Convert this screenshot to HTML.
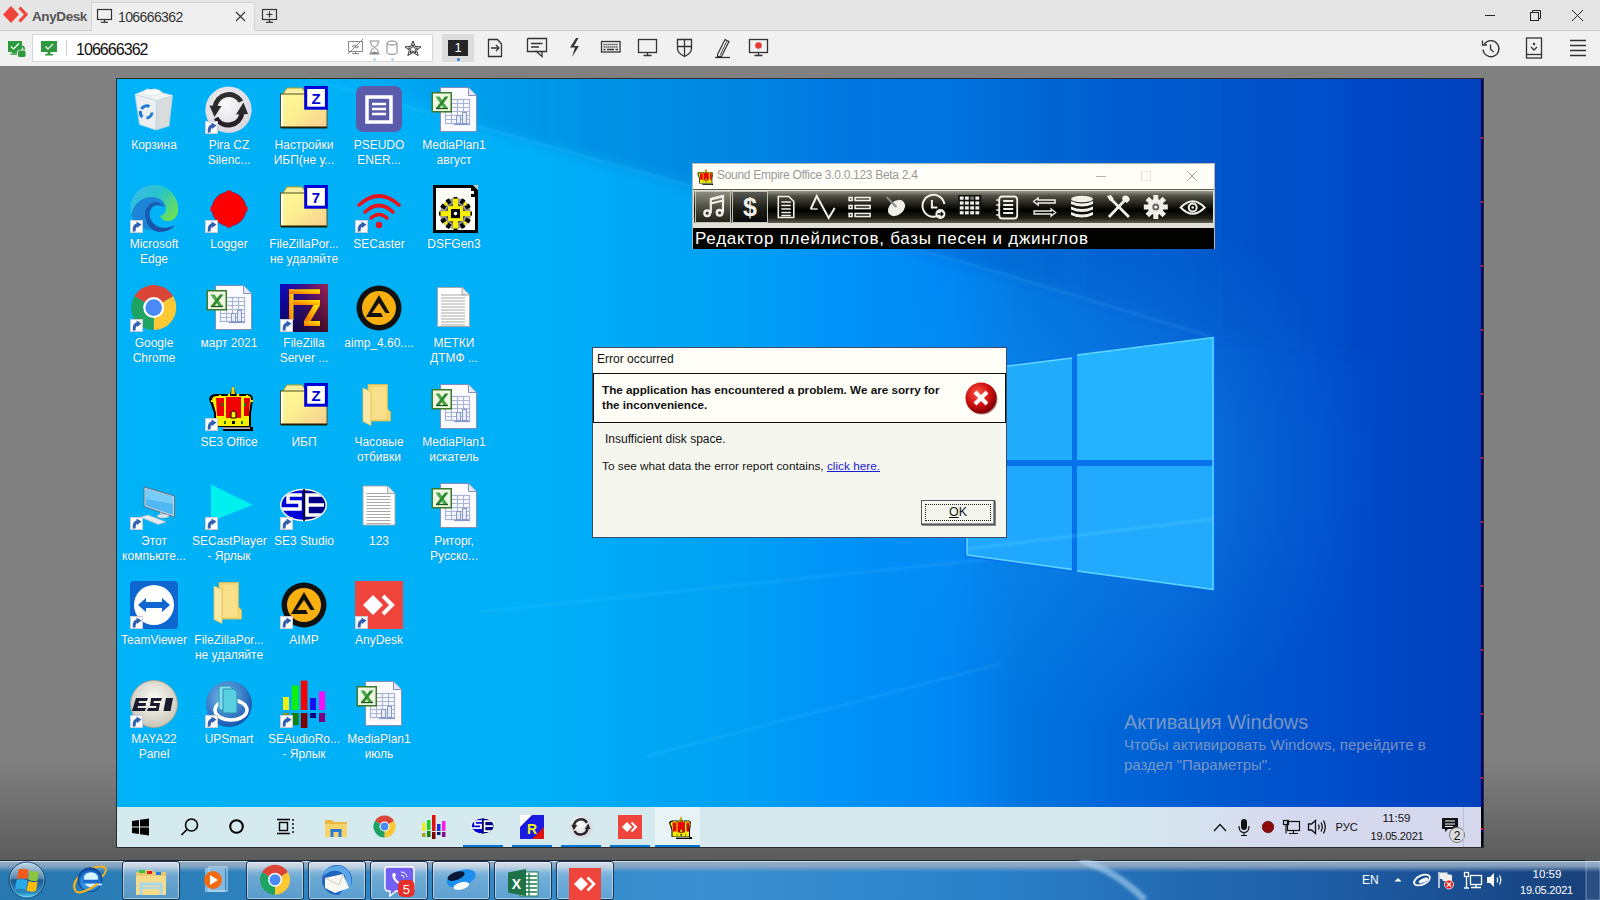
<!DOCTYPE html>
<html><head><meta charset="utf-8"><style>*{margin:0;padding:0;box-sizing:border-box}
html,body{width:1600px;height:900px;overflow:hidden}
body{position:relative;font-family:"Liberation Sans",sans-serif;background:linear-gradient(#808080 0,#808080 760px,#5c5c5c 858px);}
.a{position:absolute}
#title{left:0;top:0;width:1600px;height:31px;background:#e5e5e5;border-bottom:1px solid #cdcdcd}
#tool{left:0;top:31px;width:1600px;height:35px;background:#f1f1f1}
#remote{left:116px;top:78px;width:1368px;height:770px;background:#2b2b2b}
#screen{left:117px;top:79px;width:1366px;height:768px;overflow:hidden}
#desk{left:0;top:0;width:1366px;height:728px}
#rtask{left:0;top:728px;width:1366px;height:40px;background:linear-gradient(90deg,#d5eaef 0,#d5e9ee 986px,#d6d8ee 1186px,#d6d8ee 1366px)}
#w7{left:0;top:860px;width:1600px;height:40px;background:linear-gradient(90deg,#2878b0 0,#2e84c0 300px,#3a90d0 700px,#2a80c8 1000px,#2268b0 1200px,#1e5ea6 1320px,#1a4c8e 1480px,#183f78 1600px)}
.lab{width:74px;text-align:center;color:#fff;font-size:12px;line-height:15px;text-shadow:0 0 1px rgba(0,40,80,0.35);white-space:nowrap}
.btn{top:1px;width:58px;height:39px;border:1px solid #1c3450;border-radius:3px;background:linear-gradient(rgba(255,255,255,0.62),rgba(255,255,255,0.3) 40%,rgba(255,255,255,0.2));box-shadow:inset 0 0 0 1px rgba(255,255,255,0.45)}
</style></head><body>
<div id="title" class="a">
 <svg class="a" style="left:0;top:0" width="90" height="30">
  <polygon points="11,6 19,14.5 11,23 3,14.5" fill="#ef443b"/>
  <polyline points="19.5,7.5 26,14.5 19.5,21.5" fill="none" stroke="#ef443b" stroke-width="3.2"/>
 </svg>
 <div class="a" style="left:32px;top:9px;font-size:13.5px;font-weight:bold;color:#545454;letter-spacing:-0.4px">AnyDesk</div>
 <div class="a" style="left:91px;top:2px;width:164px;height:29px;background:#efefef;border:1px solid #d3d3d3;border-bottom:none"></div>
 <svg class="a" style="left:96px;top:8px" width="18" height="16"><rect x="1.5" y="1.5" width="14" height="10" fill="none" stroke="#333" stroke-width="1.2"/><line x1="8.5" y1="11.5" x2="8.5" y2="14" stroke="#333" stroke-width="1.2"/><line x1="5" y1="14.3" x2="12" y2="14.3" stroke="#333" stroke-width="1.2"/></svg>
 <div class="a" style="left:118px;top:8.5px;font-size:14px;color:#333;letter-spacing:-0.6px">106666362</div>
 <svg class="a" style="left:235px;top:11px" width="11" height="11"><path d="M1 1L10 10M10 1L1 10" stroke="#333" stroke-width="1.1"/></svg>
 <svg class="a" style="left:261px;top:8px" width="18" height="16"><rect x="1.5" y="1.5" width="14" height="10" fill="none" stroke="#333" stroke-width="1.2"/><line x1="8.5" y1="11.5" x2="8.5" y2="14" stroke="#333" stroke-width="1.2"/><line x1="5" y1="14.3" x2="12" y2="14.3" stroke="#333" stroke-width="1.2"/><path d="M8.5 3.5V9.5M5.5 6.5H11.5" stroke="#333" stroke-width="1.2"/></svg>
 <svg class="a" style="left:1480px;top:5px" width="110" height="20">
  <line x1="5" y1="10.5" x2="15" y2="10.5" stroke="#222" stroke-width="1"/>
  <rect x="50.5" y="7.5" width="8" height="8" fill="none" stroke="#222"/><path d="M52.5 7.5V5.5H60.5V13.5H58.5" fill="none" stroke="#222"/>
  <path d="M92 5L103 16M103 5L92 16" stroke="#222" stroke-width="1"/>
 </svg>
</div>
<div id="tool" class="a">
 <svg class="a" style="left:6px;top:9px" width="22" height="18">
  <rect x="2" y="1" width="14" height="11" fill="#2e9a3e"/><rect x="6" y="12" width="6" height="1.5" fill="#2e9a3e"/><rect x="4.5" y="13.5" width="7" height="1.3" fill="#2e9a3e"/>
  <path d="M5 6.5L7.5 9L13 3.5" fill="none" stroke="#fff" stroke-width="1.2"/>
  <rect x="11.5" y="10" width="8.5" height="7.5" rx="2" fill="#2e9a3e" stroke="#f1f1f1" stroke-width="1"/><path d="M13.5 10V8.5a2.3 2.3 0 0 1 4.6 0V10" fill="none" stroke="#2e9a3e" stroke-width="1.6"/>
 </svg>
 <div class="a" style="left:32px;top:3px;width:401px;height:28px;background:#fff;border:1px solid #d6d6d6"></div>
 <svg class="a" style="left:40px;top:9px" width="20" height="18">
  <rect x="1" y="1" width="16" height="11" fill="#2e9a3e"/><rect x="7.5" y="12" width="3" height="2" fill="#2e9a3e"/><rect x="5" y="14" width="8" height="1.5" fill="#2e9a3e"/>
  <path d="M5.5 6.5L8 9L13 4" fill="none" stroke="#fff" stroke-width="1.2"/>
 </svg>
 <div class="a" style="left:66px;top:9px;width:1px;height:16px;background:#cfcfcf"></div>
 <div class="a" style="left:76px;top:9.5px;font-size:16px;color:#111;letter-spacing:-0.95px">106666362</div>
 <svg class="a" style="left:345px;top:7px" width="80" height="22" fill="none" stroke="#888" stroke-width="1">
  <rect x="3.5" y="3.5" width="14" height="10"/><line x1="10.5" y1="13.5" x2="10.5" y2="15.5"/><line x1="7" y1="15.5" x2="14" y2="15.5"/><line x1="3" y1="16" x2="18" y2="1"/>
  <path d="M7 8.5q3-3 6 0" /><path d="M14 8.5q-3 3-6 0"/>
  <path d="M24.5 3H34.5M24.5 16H34.5M25.5 3.5Q25.5 8 29.5 9.5Q33.5 8 33.5 3.5M25.5 15.5Q25.5 11 29.5 9.5Q33.5 11 33.5 15.5"/><path d="M25.5 15.5Q29.5 12.5 33.5 15.5Z" fill="#888"/>
  <ellipse cx="47" cy="5" rx="5" ry="2"/><path d="M42 5V14.5A5 2 0 0 0 52 14.5V5"/>
  <path d="M68 3L70.3 8.5L76 8.8L71.6 12.3L73.2 17.5L68 14.5L62.8 17.5L64.4 12.3L60 8.8L65.7 8.5Z" stroke="#333"/>
  <path d="M68 6.5L69.3 10L72.5 10.2L70 12.2L71 15L68 13.3L65 15L66 12.2L63.5 10.2L66.7 10Z" stroke="#333"/>
 </svg>
 <div class="a" style="left:373px;top:27px;width:3px;height:3px;border-radius:50%;background:#b8d4f4"></div>
 <div class="a" style="left:391px;top:27px;width:3px;height:3px;border-radius:50%;background:#b8d4f4"></div>
 <div class="a" style="left:442px;top:3px;width:32px;height:28px;background:#dcdcdc"></div>
 <div class="a" style="left:448px;top:9px;width:20px;height:16px;background:#252525;color:#fff;font-size:13px;font-weight:normal;text-align:center;line-height:16px">1</div>
 <div class="a" style="left:456.5px;top:26.5px;width:3.5px;height:3.5px;border-radius:50%;background:#2a7de1"></div>
 <svg class="a" style="left:480px;top:3px" width="300" height="30" fill="none" stroke="#333" stroke-width="1.3">
  <path d="M8.5 5.5H17.5L21.5 10V22.5H8.5Z"/><path d="M11 14H19M16 11L19 14L16 17"/>
  <path d="M47.5 4.5H66.5V17.5H56.5L62 22.5V17.5"/><path d="M47.5 4.5V17.5H57"/><path d="M51 9.5H62.5M51 13H59"/>
  <path d="M96 4L90 13.5H95L92 23L99 12H94L98.5 4Z" fill="#333" stroke="none"/>
  <rect x="121.5" y="7.5" width="18.5" height="10.5"/><path d="M123.5 10.5h14.5M123.5 13h14.5" stroke-dasharray="1.2 0.8" stroke-width="1.3"/><path d="M123.5 15.5h2M127 15.5h7M135.5 15.5h2.5" stroke-width="1.3"/>
  <rect x="158.5" y="5.5" width="18" height="13"/><path d="M167.5 18.5V21M163.5 21.5H171.5"/>
  <path d="M197.5 5.5H211.5V14.5Q211.5 19 204.5 22.5Q197.5 19 197.5 14.5Z"/><path d="M204.5 5.5V22.5M197.5 12.5H211.5"/>
  <path d="M237.5 20.5L245 5.5L249 7.5L241.5 22.5L237.5 22.5Z" stroke-width="1.2"/><path d="M240 21.5L247 7" stroke-width="0.9"/><path d="M235 23.5H250" stroke-width="1.3"/>
  <rect x="269.5" y="5.5" width="18" height="13"/><path d="M278.5 18.5V21M274.5 21.5H282.5"/><circle cx="278.5" cy="11.5" r="3.3" fill="#e53935" stroke="none"/>
 </svg>
 <svg class="a" style="left:1478px;top:3.5px" width="115" height="28" fill="none" stroke="#333" stroke-width="1.3">
  <path d="M6.5 9A8 8 0 1 1 5 14.5"/><path d="M4.5 5.5V10H9"/><path d="M12.5 9.5V14L15.5 17"/>
  <rect x="48.5" y="3" width="15" height="20"/><path d="M48.5 19.5H63.5"/><circle cx="56" cy="9" r="1.2" fill="#333" stroke="none"/><path d="M53 12L56 15L59 12"/>
  <path d="M92 5.5H108M92 10.5H108M92 15.5H108M92 20.5H108"/>
 </svg>
</div>
<div id="remote" class="a"></div>
<div id="screen" class="a">
<div id="desk" class="a"><svg class="a" style="left:0;top:0" width="1366" height="728" viewBox="0 0 1366 728">
<defs>
<linearGradient id="bg" x1="0" y1="0" x2="1366" y2="0" gradientUnits="userSpaceOnUse">
<stop offset="0" stop-color="#00b2f8"/><stop offset="0.30" stop-color="#00b0f8"/><stop offset="0.46" stop-color="#00a0f4"/>
<stop offset="0.52" stop-color="#0094f8"/><stop offset="0.61" stop-color="#0088f4"/><stop offset="0.66" stop-color="#0076e0"/>
<stop offset="0.73" stop-color="#0066d8"/><stop offset="0.83" stop-color="#0055cc"/><stop offset="0.88" stop-color="#004ecc"/>
<stop offset="1" stop-color="#0040bc"/></linearGradient>
<linearGradient id="ov" x1="192" y1="0" x2="1366" y2="0" gradientUnits="userSpaceOnUse">
<stop offset="0" stop-color="#003caa" stop-opacity="0"/><stop offset="0.18" stop-color="#003caa" stop-opacity="0.2"/>
<stop offset="0.47" stop-color="#003caa" stop-opacity="0.3"/><stop offset="0.68" stop-color="#003caa" stop-opacity="0.2"/>
<stop offset="0.94" stop-color="#003caa" stop-opacity="0"/></linearGradient>
<radialGradient id="glow" cx="1000" cy="390" r="260" gradientUnits="userSpaceOnUse">
<stop offset="0" stop-color="#30b0ff" stop-opacity="0.3"/><stop offset="1" stop-color="#30b0ff" stop-opacity="0"/></radialGradient>
<filter id="bl" x="-10%" y="-10%" width="120%" height="120%"><feGaussianBlur stdDeviation="6"/></filter>
<filter id="bl2"><feGaussianBlur stdDeviation="1.2"/></filter>
</defs>
<rect width="1366" height="728" fill="url(#bg)"/>
<polygon points="192,-20 1400,-20 1400,300 1096,258 883,194 363,48" fill="url(#ov)" filter="url(#bl)"/>
<rect width="1366" height="728" fill="url(#glow)"/>

<g stroke="#9fe8ff" stroke-opacity="0.12" stroke-width="2" filter="url(#bl2)" fill="none">
<line x1="192" y1="0" x2="883" y2="194"/><line x1="883" y1="194" x2="1096" y2="258"/>
<line x1="363" y1="533" x2="883" y2="479"/>
<line x1="530" y1="677" x2="883" y2="585"/>
</g>
<polygon points="848,291 1098,257 1098,512 848,478" fill="#0872ec"/>
<polygon points="850,292 955,279 955,381 850,381" fill="#22acfc"/>
<polygon points="960,276 1096,258.5 1096,381 960,381" fill="#24b4ff"/>
<polygon points="850,387 955,387 955,490.5 850,476" fill="#20a8fe"/>
<polygon points="960,387 1096,387 1096,510.5 960,492" fill="#22aafe"/>
<g stroke="#66e0ff" stroke-width="1.5" fill="none" stroke-opacity="0.9">
<polyline points="850,292 955,279"/><polyline points="960,276 1096,258.5 1096,510.5 960,492"/><polyline points="850,476 955,490.5"/><polyline points="850,292 850,476"/>
</g>
<line x1="850" y1="470" x2="1096" y2="440" stroke="#70e0ff" stroke-opacity="0.3" stroke-width="2" filter="url(#bl2)"/>
<g font-family="Liberation Sans" fill="#b4b4bc" fill-opacity="0.68">
<text x="1007" y="649.7" font-size="20">Активация Windows</text>
<text x="1007" y="671" font-size="15">Чтобы активировать Windows, перейдите в</text>
<text x="1007" y="691" font-size="15">раздел "Параметры".</text>
</g>
</svg>
<svg class="a" style="left:13px;top:7px" width="48" height="48" viewBox="0 0 48 48"><g transform="translate(0,0)"><path d="M5 8.5L27 14.5L26 44L9.5 38.5Z" fill="#eceeef" stroke="#b8d4e4" stroke-width="0.8"/><path d="M27 14.5L42.5 9.5L39 40L26 44Z" fill="#d8dcdd" stroke="#b8d4e4" stroke-width="0.8"/><path d="M5 8.5L18 3L42.5 9.5L27 14.5Z" fill="#f2f4f4" stroke="#c8dce8" stroke-width="0.8"/><path d="M12 8Q15 2 20 4Q26 1 32 6Q28 10 20 10Z" fill="#fafafa" stroke="#d0d8dc" stroke-width="0.6"/><g fill="none" stroke="#1a7ad8" stroke-width="3"><path d="M11.5 23A6 6 0 0 1 19.5 20.5"/><path d="M22 26.5A6 6 0 0 1 16.5 32"/><path d="M12.5 31A6 6 0 0 1 10.5 25"/></g></g></svg><div class="lab a" style="left:0px;top:59px">Корзина</div>
<svg class="a" style="left:88px;top:7px" width="48" height="48" viewBox="0 0 48 48"><g transform="translate(0,0)"><defs><radialGradient id="pg" cx="45%" cy="40%" r="60%"><stop offset="0" stop-color="#fafafa"/><stop offset="1" stop-color="#d8d6de"/></radialGradient></defs><circle cx="23.5" cy="23.8" r="23.2" fill="url(#pg)"/><path d="M36 15.5A14 14 0 0 0 10 21" fill="none" stroke="#2e2e2e" stroke-width="5"/><path d="M4.5 19.5L16.5 20L9.5 31Z" fill="#2a2a2a"/><path d="M11 32A14 14 0 0 0 37 27" fill="none" stroke="#262026" stroke-width="5"/><path d="M31 28.5L43 28L38.5 16.5Z" fill="#2a2a2a"/></g><g><rect x="0.5" y="35.5" width="12" height="12" fill="#fdfdfd" stroke="#c8ccd4" stroke-width="1"/><path d="M4.2 46.5Q3.5 40.5 8 39.5" fill="none" stroke="#3060b0" stroke-width="3"/><path d="M6.5 36.5L11.5 39.5L7 43Z" fill="#3060b0"/></g></svg><div class="lab a" style="left:75px;top:59px">Pira CZ<br>Silenc...</div>
<svg class="a" style="left:163px;top:7px" width="48" height="48" viewBox="0 0 48 48"><g transform="translate(0,0)"><defs><linearGradient id="fdg" x1="0" y1="0" x2="1" y2="1"><stop offset="0" stop-color="#fff89a"/><stop offset="0.45" stop-color="#fcf090"/><stop offset="1" stop-color="#f8cc90"/></linearGradient></defs><path d="M3 8L7 2H22L25 6V9H3Z" fill="#f8f0a0" stroke="#b8a020" stroke-width="1"/><rect x="0.5" y="8" width="46.5" height="33.5" fill="url(#fdg)" stroke="#505020" stroke-width="1"/><rect x="1" y="9" width="2" height="32" fill="#fff"/><rect x="1" y="40.5" width="46" height="2" fill="#202000"/><rect x="24.2" y="0" width="23.7" height="23.7" fill="#0000d8"/><rect x="27.2" y="3" width="17.7" height="17.7" fill="#fffff8"/><text x="36" y="18" font-family="Liberation Sans" font-weight="bold" font-size="15" fill="#0000d8" text-anchor="middle">Z</text></g></svg><div class="lab a" style="left:150px;top:59px">Настройки<br>ИБП(не у...</div>
<svg class="a" style="left:238px;top:7px" width="48" height="48" viewBox="0 0 48 48"><g transform="translate(0,0)"><rect x="1" y="0" width="46" height="46" rx="7" fill="#5b5bab"/><rect x="12" y="11" width="24" height="25" fill="none" stroke="#fff" stroke-width="3.5"/><path d="M17 18H31M17 23H31M17 28H31" stroke="#fff" stroke-width="2.5"/></g></svg><div class="lab a" style="left:225px;top:59px">PSEUDO<br>ENER...</div>
<svg class="a" style="left:313px;top:7px" width="48" height="48" viewBox="0 0 48 48"><g transform="translate(0,0)"><path d="M10.5 1.5H38.5L46.5 9.5V45.5H10.5Z" fill="#fbfbff" stroke="#8090b8" stroke-width="1"/><path d="M38.5 1.5V9.5H46.5" fill="#e4e8f4" stroke="#8090b8" stroke-width="1"/><g stroke="#a8b4d8" stroke-width="1.2" fill="none"><rect x="15.5" y="13.5" width="24" height="24"/><path d="M15.5 17.5H39.5M15.5 21.5H39.5M15.5 25.5H39.5M15.5 29.5H39.5M15.5 33.5H39.5M21.5 13.5V37.5M27.5 13.5V37.5M33.5 13.5V37.5"/></g><g fill="#e8ecf8" stroke="#8898c8" stroke-width="1"><rect x="26.5" y="29.5" width="4" height="8"/><rect x="32.5" y="26.5" width="4" height="11"/></g><path d="M24 38.5H40" stroke="#8898c8" stroke-width="1.2"/><rect x="1.5" y="6" width="20.5" height="20.5" fill="#3a7a2a"/><rect x="3" y="7.5" width="17.5" height="17.5" fill="#eef6e4"/><path d="M5.5 10.5H9.5L17.5 22H13.5Z" fill="#4aa848"/><path d="M15 10.5H18.5L9.5 22H6Z" fill="#2e8a2e"/><path d="M6 22.5H18" stroke="#1a5a1a" stroke-width="1.3"/></g></svg><div class="lab a" style="left:300px;top:59px">MediaPlan1<br>август</div>
<svg class="a" style="left:13px;top:106px" width="48" height="48" viewBox="0 0 48 48"><g transform="translate(0,0)"><defs><linearGradient id="eg2" x1="0" y1="0" x2="1" y2="0.7"><stop offset="0" stop-color="#40b8f0"/><stop offset="0.5" stop-color="#28c4cc"/><stop offset="1" stop-color="#6ae05a"/></linearGradient><linearGradient id="eg3" x1="0" y1="0" x2="1" y2="1"><stop offset="0" stop-color="#1a60b8"/><stop offset="1" stop-color="#1a4a9a"/></linearGradient></defs><path d="M1 30A24 24 0 1 1 48 27Q47 34 40 36Q32 37 30 31Q36 29 36 24Q34 12 21 12Q6 13 1 30Z" fill="url(#eg2)"/><path d="M1 30Q6 13 21 12Q33 12 36 22Q32 17 25 17Q16 18 15 28Q14 40 22 46Q6 42 1 30Z" fill="#1e84d8"/><path d="M15 28Q16 18 25 17Q31 17 35 22Q29 19 24 21Q18 25 20 33Q24 43 36 43Q42 42 45 40Q40 47 29 47Q15 45 15 28Z" fill="url(#eg3)"/></g><g><rect x="0.5" y="35.5" width="12" height="12" fill="#fdfdfd" stroke="#c8ccd4" stroke-width="1"/><path d="M4.2 46.5Q3.5 40.5 8 39.5" fill="none" stroke="#3060b0" stroke-width="3"/><path d="M6.5 36.5L11.5 39.5L7 43Z" fill="#3060b0"/></g></svg><div class="lab a" style="left:0px;top:158px">Microsoft<br>Edge</div>
<svg class="a" style="left:88px;top:106px" width="48" height="48" viewBox="0 0 48 48"><g transform="translate(0,0)"><circle cx="24" cy="24" r="17" fill="#ff0000" stroke="#802060" stroke-width="0.8"/><rect x="21.5" y="5.5" width="5" height="4" fill="#ff0000"/><rect x="21.5" y="38.5" width="5" height="4" fill="#ff0000"/><rect x="5.5" y="21.5" width="4" height="5" fill="#ff0000"/><rect x="38.5" y="21.5" width="4" height="5" fill="#ff0000"/></g><g><rect x="0.5" y="35.5" width="12" height="12" fill="#fdfdfd" stroke="#c8ccd4" stroke-width="1"/><path d="M4.2 46.5Q3.5 40.5 8 39.5" fill="none" stroke="#3060b0" stroke-width="3"/><path d="M6.5 36.5L11.5 39.5L7 43Z" fill="#3060b0"/></g></svg><div class="lab a" style="left:75px;top:158px">Logger</div>
<svg class="a" style="left:163px;top:106px" width="48" height="48" viewBox="0 0 48 48"><g transform="translate(0,0)"><defs><linearGradient id="fdg" x1="0" y1="0" x2="1" y2="1"><stop offset="0" stop-color="#fff89a"/><stop offset="0.45" stop-color="#fcf090"/><stop offset="1" stop-color="#f8cc90"/></linearGradient></defs><path d="M3 8L7 2H22L25 6V9H3Z" fill="#f8f0a0" stroke="#b8a020" stroke-width="1"/><rect x="0.5" y="8" width="46.5" height="33.5" fill="url(#fdg)" stroke="#505020" stroke-width="1"/><rect x="1" y="9" width="2" height="32" fill="#fff"/><rect x="1" y="40.5" width="46" height="2" fill="#202000"/><rect x="24.2" y="0" width="23.7" height="23.7" fill="#0000d8"/><rect x="27.2" y="3" width="17.7" height="17.7" fill="#fffff8"/><text x="36" y="18" font-family="Liberation Sans" font-weight="bold" font-size="15" fill="#0000d8" text-anchor="middle">7</text></g></svg><div class="lab a" style="left:150px;top:158px">FileZillaPor...<br>не удаляйте</div>
<svg class="a" style="left:238px;top:106px" width="48" height="48" viewBox="0 0 48 48"><g transform="translate(0,0)"><g fill="none" stroke="#e8141c" stroke-width="3.6" stroke-linecap="round"><path d="M4 20Q24 2 44 20"/><path d="M10 27Q24 14 38 27"/><path d="M16 33Q24 26 32 33"/></g><circle cx="24" cy="40" r="3.2" fill="#e8141c"/></g><g><rect x="0.5" y="35.5" width="12" height="12" fill="#fdfdfd" stroke="#c8ccd4" stroke-width="1"/><path d="M4.2 46.5Q3.5 40.5 8 39.5" fill="none" stroke="#3060b0" stroke-width="3"/><path d="M6.5 36.5L11.5 39.5L7 43Z" fill="#3060b0"/></g></svg><div class="lab a" style="left:225px;top:158px">SECaster</div>
<svg class="a" style="left:313px;top:106px" width="48" height="48" viewBox="0 0 48 48"><g transform="translate(0,0)"><path d="M3 0H43L48 5V48H3Z" fill="#000"/><rect x="6" y="3" width="35" height="42" fill="#fffff8"/><rect x="41" y="12" width="4" height="33" fill="#fffff8"/><path d="M43 0H48V5Z" fill="#c8c8c0"/><rect x="41" y="6" width="3" height="3" fill="#fff"/><g transform="translate(25.5,28.6)"><circle r="15.5" fill="#9a9a96"/><rect x="-2" y="-16.5" width="4" height="5" fill="#000" transform="rotate(0)"/><rect x="-2" y="-16.5" width="4" height="5" fill="#000" transform="rotate(30)"/><rect x="-2" y="-16.5" width="4" height="5" fill="#000" transform="rotate(60)"/><rect x="-2" y="-16.5" width="4" height="5" fill="#000" transform="rotate(90)"/><rect x="-2" y="-16.5" width="4" height="5" fill="#000" transform="rotate(120)"/><rect x="-2" y="-16.5" width="4" height="5" fill="#000" transform="rotate(150)"/><rect x="-2" y="-16.5" width="4" height="5" fill="#000" transform="rotate(180)"/><rect x="-2" y="-16.5" width="4" height="5" fill="#000" transform="rotate(210)"/><rect x="-2" y="-16.5" width="4" height="5" fill="#000" transform="rotate(240)"/><rect x="-2" y="-16.5" width="4" height="5" fill="#000" transform="rotate(270)"/><rect x="-2" y="-16.5" width="4" height="5" fill="#000" transform="rotate(300)"/><rect x="-2" y="-16.5" width="4" height="5" fill="#000" transform="rotate(330)"/><circle r="10" fill="#555"/><rect x="-2.5" y="-15" width="5" height="30" fill="#f8f000"/><rect x="-15" y="-2.5" width="30" height="5" fill="#f8f000"/><rect x="-7.5" y="-7.5" width="15" height="15" fill="#f8f000"/><rect x="-4.5" y="-4.5" width="9" height="9" fill="#000"/><circle r="1.8" fill="#fff"/><rect x="-11" y="-11" width="3" height="3" fill="#f8f000"/><rect x="8" y="-11" width="3" height="3" fill="#f8f000"/><rect x="-11" y="8" width="3" height="3" fill="#f8f000"/><rect x="8" y="8" width="3" height="3" fill="#f8f000"/></g></g></svg><div class="lab a" style="left:300px;top:158px">DSFGen3</div>
<svg class="a" style="left:13px;top:205px" width="48" height="48" viewBox="0 0 48 48"><g transform="translate(0,0)"><g transform="translate(23.7,23.6)"><path d="M0 0L-19.48 -11.25A22.5 22.5 0 0 1 19.48 -11.25Z" fill="#db4437"/><path d="M0 0L19.48 -11.25A22.5 22.5 0 0 1 0 22.5Z" fill="#fcc934"/><path d="M0 0L0 22.5A22.5 22.5 0 0 1 -19.48 -11.25Z" fill="#1ea362"/><circle r="10.5" fill="#fff"/><circle r="8.3" fill="#4a8af4"/></g></g><g><rect x="0.5" y="35.5" width="12" height="12" fill="#fdfdfd" stroke="#c8ccd4" stroke-width="1"/><path d="M4.2 46.5Q3.5 40.5 8 39.5" fill="none" stroke="#3060b0" stroke-width="3"/><path d="M6.5 36.5L11.5 39.5L7 43Z" fill="#3060b0"/></g></svg><div class="lab a" style="left:0px;top:257px">Google<br>Chrome</div>
<svg class="a" style="left:88px;top:205px" width="48" height="48" viewBox="0 0 48 48"><g transform="translate(0,0)"><path d="M10.5 1.5H38.5L46.5 9.5V45.5H10.5Z" fill="#fbfbff" stroke="#8090b8" stroke-width="1"/><path d="M38.5 1.5V9.5H46.5" fill="#e4e8f4" stroke="#8090b8" stroke-width="1"/><g stroke="#a8b4d8" stroke-width="1.2" fill="none"><rect x="15.5" y="13.5" width="24" height="24"/><path d="M15.5 17.5H39.5M15.5 21.5H39.5M15.5 25.5H39.5M15.5 29.5H39.5M15.5 33.5H39.5M21.5 13.5V37.5M27.5 13.5V37.5M33.5 13.5V37.5"/></g><g fill="#e8ecf8" stroke="#8898c8" stroke-width="1"><rect x="26.5" y="29.5" width="4" height="8"/><rect x="32.5" y="26.5" width="4" height="11"/></g><path d="M24 38.5H40" stroke="#8898c8" stroke-width="1.2"/><rect x="1.5" y="6" width="20.5" height="20.5" fill="#3a7a2a"/><rect x="3" y="7.5" width="17.5" height="17.5" fill="#eef6e4"/><path d="M5.5 10.5H9.5L17.5 22H13.5Z" fill="#4aa848"/><path d="M15 10.5H18.5L9.5 22H6Z" fill="#2e8a2e"/><path d="M6 22.5H18" stroke="#1a5a1a" stroke-width="1.3"/></g></svg><div class="lab a" style="left:75px;top:257px">март 2021</div>
<svg class="a" style="left:163px;top:205px" width="48" height="48" viewBox="0 0 48 48"><g transform="translate(0,0)"><defs><linearGradient id="fz" x1="0" y1="0" x2="1" y2="0"><stop offset="0" stop-color="#0808c8"/><stop offset="0.5" stop-color="#40108a"/><stop offset="1" stop-color="#a02050"/></linearGradient><linearGradient id="fzd" x1="0" y1="0" x2="0" y2="1"><stop offset="0" stop-color="#000" stop-opacity="0"/><stop offset="1" stop-color="#000" stop-opacity="0.55"/></linearGradient><linearGradient id="fzy" x1="1" y1="0" x2="0" y2="1"><stop offset="0" stop-color="#fff000"/><stop offset="1" stop-color="#ff6a00"/></linearGradient></defs><rect x="0" y="0" width="48" height="48" fill="url(#fz)"/><rect x="0" y="0" width="48" height="48" fill="url(#fzd)"/><g fill="url(#fzy)"><rect x="9" y="5.3" width="4.5" height="31"/><rect x="9" y="5.3" width="31" height="4.7"/><rect x="13" y="16" width="27" height="5"/><polygon points="33.5,21 40,21 30.5,37 24,37"/><rect x="24" y="37" width="16" height="5"/></g></g><g><rect x="0.5" y="35.5" width="12" height="12" fill="#fdfdfd" stroke="#c8ccd4" stroke-width="1"/><path d="M4.2 46.5Q3.5 40.5 8 39.5" fill="none" stroke="#3060b0" stroke-width="3"/><path d="M6.5 36.5L11.5 39.5L7 43Z" fill="#3060b0"/></g></svg><div class="lab a" style="left:150px;top:257px">FileZilla<br>Server ...</div>
<svg class="a" style="left:238px;top:205px" width="48" height="48" viewBox="0 0 48 48"><g transform="translate(0,0)"><circle cx="24" cy="24" r="22.5" fill="#111"/><circle cx="24" cy="24" r="17" fill="#f8b010"/><path d="M24 11L37 33H11Z" fill="#111"/><path d="M24 19L30.5 29H17Z" fill="#f8b010"/><path d="M26 29H37V33H28Z" fill="#f8b010"/></g></svg><div class="lab a" style="left:225px;top:257px">aimp_4.60....</div>
<svg class="a" style="left:313px;top:205px" width="48" height="48" viewBox="0 0 48 48"><g transform="translate(5,2)"><path d="M2.5 1.5H27L34.5 9V40.5H2.5Z" fill="#fff" stroke="#a8a8a8" stroke-width="1"/><path d="M27 1.5V9H34.5" fill="#e8e8e8" stroke="#a8a8a8" stroke-width="1"/><path d="M6 9 H30" stroke="#a8a8a8" stroke-width="1"/><path d="M6 12 H30" stroke="#a8a8a8" stroke-width="1"/><path d="M6 15 H30" stroke="#a8a8a8" stroke-width="1"/><path d="M6 18 H30" stroke="#a8a8a8" stroke-width="1"/><path d="M6 21 H30" stroke="#a8a8a8" stroke-width="1"/><path d="M6 24 H30" stroke="#a8a8a8" stroke-width="1"/><path d="M6 27 H30" stroke="#a8a8a8" stroke-width="1"/><path d="M6 30 H30" stroke="#a8a8a8" stroke-width="1"/><path d="M6 33 H30" stroke="#a8a8a8" stroke-width="1"/><path d="M6 36 H30" stroke="#a8a8a8" stroke-width="1"/><path d="M6 39 H30" stroke="#a8a8a8" stroke-width="1"/></g></svg><div class="lab a" style="left:300px;top:257px">МЕТКИ<br>ДТМФ ...</div>
<svg class="a" style="left:88px;top:304px" width="48" height="48" viewBox="0 0 48 48"><g transform="translate(0,0)"><path d="M4 16Q5 11 11 11H25L28 3L31 11H43Q48 11 48 17L46 30L46 44H9L9 30Z" fill="#000"/><path d="M7 16Q8 13 12 13H44Q46 13 46 17L44 30V43H11V30Z" fill="#f8f000"/><path d="M11 15H19L19 33H12Z" fill="#f00000"/><path d="M21 14H36V35H21Z" fill="#f00000"/><path d="M39 15H45L44 33H39Z" fill="#e00000"/><path d="M26 30Q28 26 31 30V35H26Z" fill="#f8f000" stroke="#000" stroke-width="1"/><path d="M27 4L29 4L30 11H26Z" fill="#f8d000"/><g fill="#f8f000"><circle cx="15" cy="13" r="1.3"/><circle cx="24" cy="12" r="1.3"/><circle cx="33" cy="12" r="1.3"/><circle cx="42" cy="13" r="1.3"/><circle cx="7" cy="18" r="1.2"/><circle cx="47" cy="18" r="1.2"/></g><g fill="#108010"><rect x="19" y="38" width="2" height="3"/><rect x="36" y="38" width="2" height="3"/><rect x="16" y="20" width="2" height="3"/><rect x="39" y="20" width="2" height="3"/></g><rect x="27" y="38" width="3" height="3" fill="#000"/><rect x="18" y="44" width="32" height="4" fill="#000"/><rect x="18" y="44.5" width="27" height="1.2" fill="#fff"/></g><g><rect x="0.5" y="35.5" width="12" height="12" fill="#fdfdfd" stroke="#c8ccd4" stroke-width="1"/><path d="M4.2 46.5Q3.5 40.5 8 39.5" fill="none" stroke="#3060b0" stroke-width="3"/><path d="M6.5 36.5L11.5 39.5L7 43Z" fill="#3060b0"/></g></svg><div class="lab a" style="left:75px;top:356px">SE3 Office</div>
<svg class="a" style="left:163px;top:304px" width="48" height="48" viewBox="0 0 48 48"><g transform="translate(0,0)"><defs><linearGradient id="fdg" x1="0" y1="0" x2="1" y2="1"><stop offset="0" stop-color="#fff89a"/><stop offset="0.45" stop-color="#fcf090"/><stop offset="1" stop-color="#f8cc90"/></linearGradient></defs><path d="M3 8L7 2H22L25 6V9H3Z" fill="#f8f0a0" stroke="#b8a020" stroke-width="1"/><rect x="0.5" y="8" width="46.5" height="33.5" fill="url(#fdg)" stroke="#505020" stroke-width="1"/><rect x="1" y="9" width="2" height="32" fill="#fff"/><rect x="1" y="40.5" width="46" height="2" fill="#202000"/><rect x="24.2" y="0" width="23.7" height="23.7" fill="#0000d8"/><rect x="27.2" y="3" width="17.7" height="17.7" fill="#fffff8"/><text x="36" y="18" font-family="Liberation Sans" font-weight="bold" font-size="15" fill="#0000d8" text-anchor="middle">Z</text></g></svg><div class="lab a" style="left:150px;top:356px">ИБП</div>
<svg class="a" style="left:238px;top:304px" width="48" height="48" viewBox="0 0 48 48"><g transform="translate(0,0)"><path d="M13 1.5H32.5V26L35.5 29V38H13Z" fill="#f4d672" stroke="#e0bc50" stroke-width="0.8"/><path d="M17 4H31V36H17Z" fill="#f8e08a"/><path d="M8 5L16 9V42.5L8 38.5Z" fill="#fce9a8" stroke="#e6c45a" stroke-width="0.8"/></g></svg><div class="lab a" style="left:225px;top:356px">Часовые<br>отбивки</div>
<svg class="a" style="left:313px;top:304px" width="48" height="48" viewBox="0 0 48 48"><g transform="translate(0,0)"><path d="M10.5 1.5H38.5L46.5 9.5V45.5H10.5Z" fill="#fbfbff" stroke="#8090b8" stroke-width="1"/><path d="M38.5 1.5V9.5H46.5" fill="#e4e8f4" stroke="#8090b8" stroke-width="1"/><g stroke="#a8b4d8" stroke-width="1.2" fill="none"><rect x="15.5" y="13.5" width="24" height="24"/><path d="M15.5 17.5H39.5M15.5 21.5H39.5M15.5 25.5H39.5M15.5 29.5H39.5M15.5 33.5H39.5M21.5 13.5V37.5M27.5 13.5V37.5M33.5 13.5V37.5"/></g><g fill="#e8ecf8" stroke="#8898c8" stroke-width="1"><rect x="26.5" y="29.5" width="4" height="8"/><rect x="32.5" y="26.5" width="4" height="11"/></g><path d="M24 38.5H40" stroke="#8898c8" stroke-width="1.2"/><rect x="1.5" y="6" width="20.5" height="20.5" fill="#3a7a2a"/><rect x="3" y="7.5" width="17.5" height="17.5" fill="#eef6e4"/><path d="M5.5 10.5H9.5L17.5 22H13.5Z" fill="#4aa848"/><path d="M15 10.5H18.5L9.5 22H6Z" fill="#2e8a2e"/><path d="M6 22.5H18" stroke="#1a5a1a" stroke-width="1.3"/></g></svg><div class="lab a" style="left:300px;top:356px">MediaPlan1<br>искатель</div>
<svg class="a" style="left:13px;top:403px" width="48" height="48" viewBox="0 0 48 48"><g transform="translate(0,0)"><path d="M14 5L44.5 14V35L14 24.5Z" fill="#c8d8e4" stroke="#607080" stroke-width="1"/><path d="M15.5 7L43 15V33L15.5 23.5Z" fill="#50b8f4"/><path d="M15.5 7L43 15V22L15.5 17Z" fill="#78ccf8"/><path d="M30 30L33 31L33 33L30 32Z" fill="#b0b8c0"/><ellipse cx="33" cy="34" rx="6" ry="2" fill="#dde4ea" stroke="#a0aab4" stroke-width="0.6"/><path d="M10.5 35L18 33L36 40L28 42.5Z" fill="#f2f6f8" stroke="#a8b4bc" stroke-width="0.7"/><path d="M14 35L31 41.5M17 34.5L33.5 40.5M12.5 36L29.5 42" stroke="#c4ccd4" stroke-width="0.5"/></g><g><rect x="0.5" y="35.5" width="12" height="12" fill="#fdfdfd" stroke="#c8ccd4" stroke-width="1"/><path d="M4.2 46.5Q3.5 40.5 8 39.5" fill="none" stroke="#3060b0" stroke-width="3"/><path d="M6.5 36.5L11.5 39.5L7 43Z" fill="#3060b0"/></g></svg><div class="lab a" style="left:0px;top:455px">Этот<br>компьюте...</div>
<svg class="a" style="left:88px;top:403px" width="48" height="48" viewBox="0 0 48 48"><g transform="translate(0,0)"><path d="M6 2.6L48 23L6 39.3Z" fill="#00f0f0"/></g><g><rect x="0.5" y="35.5" width="12" height="12" fill="#fdfdfd" stroke="#c8ccd4" stroke-width="1"/><path d="M4.2 46.5Q3.5 40.5 8 39.5" fill="none" stroke="#3060b0" stroke-width="3"/><path d="M6.5 36.5L11.5 39.5L7 43Z" fill="#3060b0"/></g></svg><div class="lab a" style="left:75px;top:455px">SECastPlayer<br>- Ярлык</div>
<svg class="a" style="left:163px;top:403px" width="48" height="48" viewBox="0 0 48 48"><g transform="translate(0,0)"><defs><clipPath id="sec"><ellipse cx="23.5" cy="23" rx="22" ry="14.8"/></clipPath></defs><ellipse cx="23.5" cy="23" rx="23.5" ry="16.2" fill="#fffff0"/><g clip-path="url(#sec)"><rect x="0" y="0" width="24" height="48" fill="#0000d8"/><rect x="24" y="0" width="24" height="48" fill="#000088"/><path d="M22 13H8V20H20V27H2" fill="none" stroke="#fffff8" stroke-width="3.5"/><path d="M48 13H27V33H48M27 23H44" fill="none" stroke="#fffff8" stroke-width="3.5"/></g><path d="M24 7V39" stroke="#000" stroke-width="1.6"/></g><g><rect x="0.5" y="35.5" width="12" height="12" fill="#fdfdfd" stroke="#c8ccd4" stroke-width="1"/><path d="M4.2 46.5Q3.5 40.5 8 39.5" fill="none" stroke="#3060b0" stroke-width="3"/><path d="M6.5 36.5L11.5 39.5L7 43Z" fill="#3060b0"/></g></svg><div class="lab a" style="left:150px;top:455px">SE3 Studio</div>
<svg class="a" style="left:238px;top:403px" width="48" height="48" viewBox="0 0 48 48"><g transform="translate(5.5,2.5)"><path d="M2.5 1.5H27L34.5 9V40.5H2.5Z" fill="#fff" stroke="#a8a8a8" stroke-width="1"/><path d="M27 1.5V9H34.5" fill="#e8e8e8" stroke="#a8a8a8" stroke-width="1"/><path d="M6 9 H30" stroke="#a8a8a8" stroke-width="1"/><path d="M6 12 H30" stroke="#a8a8a8" stroke-width="1"/><path d="M6 15 H30" stroke="#a8a8a8" stroke-width="1"/><path d="M6 18 H30" stroke="#a8a8a8" stroke-width="1"/><path d="M6 21 H30" stroke="#a8a8a8" stroke-width="1"/><path d="M6 24 H30" stroke="#a8a8a8" stroke-width="1"/><path d="M6 27 H30" stroke="#a8a8a8" stroke-width="1"/><path d="M6 30 H30" stroke="#a8a8a8" stroke-width="1"/><path d="M6 33 H30" stroke="#a8a8a8" stroke-width="1"/><path d="M6 36 H30" stroke="#a8a8a8" stroke-width="1"/><path d="M6 39 H30" stroke="#a8a8a8" stroke-width="1"/></g></svg><div class="lab a" style="left:225px;top:455px">123</div>
<svg class="a" style="left:313px;top:403px" width="48" height="48" viewBox="0 0 48 48"><g transform="translate(0,0)"><path d="M10.5 1.5H38.5L46.5 9.5V45.5H10.5Z" fill="#fbfbff" stroke="#8090b8" stroke-width="1"/><path d="M38.5 1.5V9.5H46.5" fill="#e4e8f4" stroke="#8090b8" stroke-width="1"/><g stroke="#a8b4d8" stroke-width="1.2" fill="none"><rect x="15.5" y="13.5" width="24" height="24"/><path d="M15.5 17.5H39.5M15.5 21.5H39.5M15.5 25.5H39.5M15.5 29.5H39.5M15.5 33.5H39.5M21.5 13.5V37.5M27.5 13.5V37.5M33.5 13.5V37.5"/></g><g fill="#e8ecf8" stroke="#8898c8" stroke-width="1"><rect x="26.5" y="29.5" width="4" height="8"/><rect x="32.5" y="26.5" width="4" height="11"/></g><path d="M24 38.5H40" stroke="#8898c8" stroke-width="1.2"/><rect x="1.5" y="6" width="20.5" height="20.5" fill="#3a7a2a"/><rect x="3" y="7.5" width="17.5" height="17.5" fill="#eef6e4"/><path d="M5.5 10.5H9.5L17.5 22H13.5Z" fill="#4aa848"/><path d="M15 10.5H18.5L9.5 22H6Z" fill="#2e8a2e"/><path d="M6 22.5H18" stroke="#1a5a1a" stroke-width="1.3"/></g></svg><div class="lab a" style="left:300px;top:455px">Риторг,<br>Русско...</div>
<svg class="a" style="left:13px;top:502px" width="48" height="48" viewBox="0 0 48 48"><g transform="translate(0,0)"><rect x="0" y="0" width="48" height="48" rx="4" fill="#0e66d0"/><circle cx="24" cy="24" r="20" fill="#fff"/><path d="M8 24L16 17V21H32V17L40 24L32 31V27H16V31Z" fill="#0e66d0"/></g><g><rect x="0.5" y="35.5" width="12" height="12" fill="#fdfdfd" stroke="#c8ccd4" stroke-width="1"/><path d="M4.2 46.5Q3.5 40.5 8 39.5" fill="none" stroke="#3060b0" stroke-width="3"/><path d="M6.5 36.5L11.5 39.5L7 43Z" fill="#3060b0"/></g></svg><div class="lab a" style="left:0px;top:554px">TeamViewer</div>
<svg class="a" style="left:88px;top:502px" width="48" height="48" viewBox="0 0 48 48"><g transform="translate(1,0)"><path d="M13 1.5H32.5V26L35.5 29V38H13Z" fill="#f4d672" stroke="#e0bc50" stroke-width="0.8"/><path d="M17 4H31V36H17Z" fill="#f8e08a"/><path d="M8 5L16 9V42.5L8 38.5Z" fill="#fce9a8" stroke="#e6c45a" stroke-width="0.8"/></g></svg><div class="lab a" style="left:75px;top:554px">FileZillaPor...<br>не удаляйте</div>
<svg class="a" style="left:163px;top:502px" width="48" height="48" viewBox="0 0 48 48"><g transform="translate(0,0)"><circle cx="24" cy="24" r="22.5" fill="#111"/><circle cx="24" cy="24" r="17" fill="#f8b010"/><path d="M24 11L37 33H11Z" fill="#111"/><path d="M24 19L30.5 29H17Z" fill="#f8b010"/><path d="M26 29H37V33H28Z" fill="#f8b010"/></g><g><rect x="0.5" y="35.5" width="12" height="12" fill="#fdfdfd" stroke="#c8ccd4" stroke-width="1"/><path d="M4.2 46.5Q3.5 40.5 8 39.5" fill="none" stroke="#3060b0" stroke-width="3"/><path d="M6.5 36.5L11.5 39.5L7 43Z" fill="#3060b0"/></g></svg><div class="lab a" style="left:150px;top:554px">AIMP</div>
<svg class="a" style="left:238px;top:502px" width="48" height="48" viewBox="0 0 48 48"><g transform="translate(0,0)"><rect x="0" y="0" width="48" height="48" fill="#ef443b"/><polygon points="18,14 28,24 18,34 8,24" fill="#fff"/><polyline points="28,15 37,24 28,33" fill="none" stroke="#fff" stroke-width="4"/></g><g><rect x="0.5" y="35.5" width="12" height="12" fill="#fdfdfd" stroke="#c8ccd4" stroke-width="1"/><path d="M4.2 46.5Q3.5 40.5 8 39.5" fill="none" stroke="#3060b0" stroke-width="3"/><path d="M6.5 36.5L11.5 39.5L7 43Z" fill="#3060b0"/></g></svg><div class="lab a" style="left:225px;top:554px">AnyDesk</div>
<svg class="a" style="left:13px;top:601px" width="48" height="48" viewBox="0 0 48 48"><g transform="translate(0,0)"><defs><radialGradient id="mg" cx="50%" cy="40%" r="60%"><stop offset="0" stop-color="#fffff8"/><stop offset="1" stop-color="#c8c4b8"/></radialGradient></defs><circle cx="24" cy="24" r="23.5" fill="url(#mg)" stroke="#a8a498" stroke-width="1"/><path d="M6 18H18L17 21H9L8.5 23H16L15.5 26H8L7.5 28H16L15 31H2Z" fill="#1a1a30"/><path d="M21 18H32L31 21H24L23.5 23H30L28.5 31H17L18 28H26L26.5 26H20Z" fill="#1a1a30"/><path d="M36 18H43L40.5 31H33.5Z" fill="#1a1a30"/></g><g><rect x="0.5" y="35.5" width="12" height="12" fill="#fdfdfd" stroke="#c8ccd4" stroke-width="1"/><path d="M4.2 46.5Q3.5 40.5 8 39.5" fill="none" stroke="#3060b0" stroke-width="3"/><path d="M6.5 36.5L11.5 39.5L7 43Z" fill="#3060b0"/></g></svg><div class="lab a" style="left:0px;top:653px">MAYA22<br>Panel</div>
<svg class="a" style="left:88px;top:601px" width="48" height="48" viewBox="0 0 48 48"><g transform="translate(0,0)"><defs><radialGradient id="ug" cx="40%" cy="35%" r="65%"><stop offset="0" stop-color="#78c0f0"/><stop offset="1" stop-color="#1858b0"/></radialGradient></defs><circle cx="24" cy="24" r="23" fill="url(#ug)"/><ellipse cx="26" cy="30" rx="16" ry="10" fill="none" stroke="#fff" stroke-width="3.5"/><path d="M14 6H25L28 9V30H14Z" fill="#80e0e8" stroke="#2a88b8" stroke-width="1"/><path d="M18 9H29L32 12V33H18Z" fill="#58d0e0" stroke="#2a88b8" stroke-width="1"/></g><g><rect x="0.5" y="35.5" width="12" height="12" fill="#fdfdfd" stroke="#c8ccd4" stroke-width="1"/><path d="M4.2 46.5Q3.5 40.5 8 39.5" fill="none" stroke="#3060b0" stroke-width="3"/><path d="M6.5 36.5L11.5 39.5L7 43Z" fill="#3060b0"/></g></svg><div class="lab a" style="left:75px;top:653px">UPSmart</div>
<svg class="a" style="left:163px;top:601px" width="48" height="48" viewBox="0 0 48 48"><g transform="translate(0,0)"><rect x="3" y="17" width="6" height="13" fill="#f0f010"/><rect x="3" y="33" width="6" height="4" fill="#909020"/><rect x="11.7" y="5.5" width="7" height="24.5" fill="#10f010"/><rect x="11.7" y="33" width="7" height="12" fill="#108010"/><rect x="20.9" y="0.6" width="6.5" height="29.4" fill="#f80000"/><rect x="20.9" y="33" width="6.5" height="15" fill="#800000"/><rect x="30" y="18" width="6" height="12" fill="#1010f0"/><rect x="30" y="33" width="6" height="5" fill="#000080"/><rect x="39" y="11.4" width="6" height="18.6" fill="#f810f8"/><rect x="39" y="33" width="6" height="9" fill="#800080"/></g><g><rect x="0.5" y="35.5" width="12" height="12" fill="#fdfdfd" stroke="#c8ccd4" stroke-width="1"/><path d="M4.2 46.5Q3.5 40.5 8 39.5" fill="none" stroke="#3060b0" stroke-width="3"/><path d="M6.5 36.5L11.5 39.5L7 43Z" fill="#3060b0"/></g></svg><div class="lab a" style="left:150px;top:653px">SEAudioRo...<br>- Ярлык</div>
<svg class="a" style="left:238px;top:601px" width="48" height="48" viewBox="0 0 48 48"><g transform="translate(0,0)"><path d="M10.5 1.5H38.5L46.5 9.5V45.5H10.5Z" fill="#fbfbff" stroke="#8090b8" stroke-width="1"/><path d="M38.5 1.5V9.5H46.5" fill="#e4e8f4" stroke="#8090b8" stroke-width="1"/><g stroke="#a8b4d8" stroke-width="1.2" fill="none"><rect x="15.5" y="13.5" width="24" height="24"/><path d="M15.5 17.5H39.5M15.5 21.5H39.5M15.5 25.5H39.5M15.5 29.5H39.5M15.5 33.5H39.5M21.5 13.5V37.5M27.5 13.5V37.5M33.5 13.5V37.5"/></g><g fill="#e8ecf8" stroke="#8898c8" stroke-width="1"><rect x="26.5" y="29.5" width="4" height="8"/><rect x="32.5" y="26.5" width="4" height="11"/></g><path d="M24 38.5H40" stroke="#8898c8" stroke-width="1.2"/><rect x="1.5" y="6" width="20.5" height="20.5" fill="#3a7a2a"/><rect x="3" y="7.5" width="17.5" height="17.5" fill="#eef6e4"/><path d="M5.5 10.5H9.5L17.5 22H13.5Z" fill="#4aa848"/><path d="M15 10.5H18.5L9.5 22H6Z" fill="#2e8a2e"/><path d="M6 22.5H18" stroke="#1a5a1a" stroke-width="1.3"/></g></svg><div class="lab a" style="left:225px;top:653px">MediaPlan1<br>июль</div><!-- Sound Empire window (screen coords: page-117, page-79) -->
<div class="a" style="left:575px;top:84px;width:523px;height:86px;background:#fffff8;border:1px solid #b8b8b0">
 <svg class="a" style="left:3px;top:4px" width="17" height="17" viewBox="0 0 48 48"><path d="M4 16Q5 11 11 11H25L28 3L31 11H43Q48 11 48 17L46 30L46 44H9L9 30Z" fill="#000"/><path d="M7 16Q8 13 12 13H44Q46 13 46 17L44 30V43H11V30Z" fill="#f8f000"/><path d="M11 15H19L19 33H12Z" fill="#f00000"/><path d="M21 14H36V35H21Z" fill="#f00000"/><path d="M39 15H45L44 33H39Z" fill="#e00000"/><path d="M26 30Q28 26 31 30V35H26Z" fill="#f8f000" stroke="#000" stroke-width="1"/><path d="M27 4L29 4L30 11H26Z" fill="#f8d000"/><g fill="#f8f000"><circle cx="15" cy="13" r="1.3"/><circle cx="24" cy="12" r="1.3"/><circle cx="33" cy="12" r="1.3"/><circle cx="42" cy="13" r="1.3"/><circle cx="7" cy="18" r="1.2"/><circle cx="47" cy="18" r="1.2"/></g><g fill="#108010"><rect x="19" y="38" width="2" height="3"/><rect x="36" y="38" width="2" height="3"/><rect x="16" y="20" width="2" height="3"/><rect x="39" y="20" width="2" height="3"/></g><rect x="27" y="38" width="3" height="3" fill="#000"/><rect x="18" y="44" width="32" height="4" fill="#000"/><rect x="18" y="44.5" width="27" height="1.2" fill="#fff"/></svg>
 <div class="a" style="left:24px;top:4px;font-size:12px;color:#9a9a9a;letter-spacing:-0.3px;white-space:nowrap">Sound Empire Office 3.0.0.123 Beta 2.4</div>
 <svg class="a" style="left:398px;top:5px" width="120" height="16" fill="none" stroke="#b4b4b4" stroke-width="1">
  <path d="M5 7.5H15"/><rect x="50.5" y="2.5" width="9" height="9" stroke="#e4e4dc"/><path d="M96 2L106 12M106 2L96 12" stroke="#a0a8a8"/>
 </svg>
 <div class="a" style="left:0;top:24.5px;width:521px;height:39px;border-top:1.5px solid #5a5a50;background:#e2e0d6"></div><div class="a" style="left:1px;top:27px;width:519px;height:32px;background:linear-gradient(#9a9a8c 0%,#505048 15%,#1a1a14 45%,#000 60%,#202018 85%,#606050 100%)"></div>
 <div class="a" style="left:2px;top:27px;width:36px;height:32px;border:1px solid #c4c4b4;background:linear-gradient(#8c8c7e,#4a4a40 55%,#22221c)"></div>
 <div class="a" style="left:39px;top:27px;width:36px;height:32px;border:1px solid #c4c4b4;background:linear-gradient(#5a5a52,#1a1a16 60%,#0a0a08)"></div>
 <svg class="a" style="left:2px;top:27px" width="520" height="33"><g transform="translate(0,0)"><g fill="none" stroke="#f0f0e8"><path d="M15.8 22V8L28 5V21.5" stroke-width="2.2"/><path d="M15.8 8.3L28 5.3" stroke-width="2.6"/><path d="M15.8 12.5L28 9.5" stroke-width="2"/><circle cx="12.2" cy="22.2" r="2.8" stroke-width="2.4"/><circle cx="24.6" cy="21.8" r="2.8" stroke-width="2.4"/></g></g><g transform="translate(36.9,0)"><text x="18" y="25" font-family="Liberation Sans" font-weight="bold" font-size="25" text-anchor="middle" fill="#f0f0e8">$</text></g><g transform="translate(73.8,0)"><g fill="none" stroke="#f0f0e8" stroke-width="1.6"><path d="M9.5 5.5H20L25 10.5V26.5H9.5Z"/><path d="M12.5 11H22M12.5 14.5H22M12.5 18H22M12.5 21.5H22M12.5 24.5H22"/></g></g><g transform="translate(110.7,0)"><g fill="none" stroke="#f0f0e8" stroke-width="2"><path d="M5 18L11 5L23 27L29 17"/><path d="M5 18H12" stroke-width="1.4"/></g></g><g transform="translate(147.6,0)"><g fill="none" stroke="#f0f0e8" stroke-width="1.6"><rect x="6.5" y="6.5" width="3" height="3"/><rect x="12.5" y="6.5" width="15" height="3"/><rect x="6.5" y="14.5" width="3" height="3"/><rect x="12.5" y="14.5" width="15" height="3"/><rect x="6.5" y="22.5" width="3" height="3"/><rect x="12.5" y="22.5" width="15" height="3"/></g></g><g transform="translate(184.5,0)"><ellipse cx="17" cy="17" rx="9.5" ry="7" transform="rotate(-40 17 17)" fill="#f0f0e8"/><path d="M7 6L17 16" stroke="#8a8a8a" stroke-width="2"/></g><g transform="translate(221.4,0)"><g fill="none" stroke="#f0f0e8" stroke-width="2"><path d="M24.5 23A11 11 0 1 1 28 13"/><path d="M15.5 9V16.5H21"/></g><circle cx="24" cy="23" r="5" fill="#f0f0e8"/><path d="M21 23H26M24.5 21L26.5 23L24.5 25" stroke="#111" fill="none" stroke-width="1.3"/></g><g transform="translate(258.3,0)"><rect x="5" y="4" width="23" height="21" fill="#111"/><rect x="6.5" y="5.5" width="3.8" height="3.2" fill="#f0f0e8"/><rect x="6.5" y="10.4" width="3.8" height="3.2" fill="#f0f0e8"/><rect x="6.5" y="15.3" width="3.8" height="3.2" fill="#f0f0e8"/><rect x="6.5" y="20.2" width="3.8" height="3.2" fill="#f0f0e8"/><rect x="11.7" y="5.5" width="3.8" height="3.2" fill="#f0f0e8"/><rect x="11.7" y="10.4" width="3.8" height="3.2" fill="#f0f0e8"/><rect x="11.7" y="15.3" width="3.8" height="3.2" fill="#f0f0e8"/><rect x="11.7" y="20.2" width="3.8" height="3.2" fill="#f0f0e8"/><rect x="16.9" y="5.5" width="3.8" height="3.2" fill="#777"/><rect x="16.9" y="10.4" width="3.8" height="3.2" fill="#f0f0e8"/><rect x="16.9" y="15.3" width="3.8" height="3.2" fill="#f0f0e8"/><rect x="16.9" y="20.2" width="3.8" height="3.2" fill="#f0f0e8"/><rect x="22.1" y="5.5" width="3.8" height="3.2" fill="#f0f0e8"/><rect x="22.1" y="10.4" width="3.8" height="3.2" fill="#f0f0e8"/><rect x="22.1" y="15.3" width="3.8" height="3.2" fill="#f0f0e8"/><rect x="22.1" y="20.2" width="3.8" height="3.2" fill="#f0f0e8"/></g><g transform="translate(295.2,0)"><g fill="none" stroke="#f0f0e8" stroke-width="1.8"><rect x="9" y="5.5" width="18" height="22" rx="3"/><path d="M13 10H23M13 14H23M13 18H23M13 22H23"/><path d="M6 9H10M6 14H10M6 19H10M6 24H10" stroke-width="1.5"/></g></g><g transform="translate(332.1,0)"><g fill="none" stroke="#f0f0e8" stroke-width="1.4"><path d="M11 7L6.5 10.5L11 14V12H28V9H11Z"/><path d="M24 18L28.5 21.5L24 25V23H7V20H24Z"/></g></g><g transform="translate(369,0)"><g fill="#f0f0e8"><ellipse cx="18" cy="8" rx="11" ry="3.3"/><path d="M7 10Q18 15 29 10V13Q18 18 7 13Z"/><path d="M7 15.5Q18 20.5 29 15.5V18.5Q18 23.5 7 18.5Z"/><path d="M7 21Q18 26 29 21V24Q18 29 7 24Z"/></g></g><g transform="translate(405.9,0)"><g fill="none" stroke="#f0f0e8" stroke-width="2.8"><path d="M8 26L27 6"/><path d="M9 7L28 26"/></g><path d="M22 5Q28 3 29 9L26 12L21 8Z" fill="#f0f0e8"/><path d="M6 5L10 4L13 8L9 10Z" fill="#f0f0e8"/></g><g transform="translate(442.8,0)"><g fill="#f0f0e8"><circle cx="18" cy="16" r="8"/><rect x="15.5" y="4" width="5" height="6" transform="rotate(0 18 16)"/><rect x="15.5" y="4" width="5" height="6" transform="rotate(45 18 16)"/><rect x="15.5" y="4" width="5" height="6" transform="rotate(90 18 16)"/><rect x="15.5" y="4" width="5" height="6" transform="rotate(135 18 16)"/><rect x="15.5" y="4" width="5" height="6" transform="rotate(180 18 16)"/><rect x="15.5" y="4" width="5" height="6" transform="rotate(225 18 16)"/><rect x="15.5" y="4" width="5" height="6" transform="rotate(270 18 16)"/><rect x="15.5" y="4" width="5" height="6" transform="rotate(315 18 16)"/></g><circle cx="18" cy="16" r="3.5" fill="#666"/><circle cx="18" cy="16" r="1.6" fill="#f0f0e8"/></g><g transform="translate(479.7,0)"><path d="M6 16.5Q18 4 30 16.5Q18 29 6 16.5Z" fill="none" stroke="#f0f0e8" stroke-width="2"/><circle cx="18" cy="16.5" r="4" fill="none" stroke="#f0f0e8" stroke-width="2"/><circle cx="18" cy="16.5" r="1.3" fill="#f0f0e8"/></g></svg>
 <div class="a" style="left:0;top:63.5px;width:521px;height:21.5px;background:#020200"></div>
 <div class="a" style="left:2px;top:63.5px;font-size:17px;color:#fff;letter-spacing:0.75px;white-space:nowrap;line-height:22px">Редактор плейлистов, базы песен и джинглов</div>
</div>

<!-- Error dialog -->
<div class="a" style="left:475px;top:268px;width:415px;height:191px;background:#f5f7ef;border:1px solid #3a4a6a">
 <div class="a" style="left:0;top:0;width:413px;height:25px;background:#fffff8"></div>
 <div class="a" style="left:4px;top:4px;font-size:12px;color:#111">Error occurred</div>
 <div class="a" style="left:0;top:25px;width:413px;height:50px;background:#fffff8;border:1.5px solid #111"></div>
 <div class="a" style="left:9px;top:34px;font-size:11.7px;font-weight:bold;color:#111;line-height:15px">The application has encountered a problem. We are sorry for<br>the inconvenience.</div>
 <svg class="a" style="left:371px;top:33px" width="34" height="34">
  <defs><radialGradient id="er" cx="40%" cy="35%" r="65%"><stop offset="0" stop-color="#ff5a4a"/><stop offset="0.6" stop-color="#d01010"/><stop offset="1" stop-color="#800000"/></radialGradient></defs>
  <circle cx="18" cy="18" r="15.5" fill="#5a0000" opacity="0.5"/>
  <circle cx="17" cy="17" r="15.5" fill="url(#er)"/>
  <path d="M11 11L23 23M23 11L11 23" stroke="#fff" stroke-width="4"/>
 </svg>
 <div class="a" style="left:12px;top:84px;font-size:12px;color:#111">Insufficient disk space.</div>
 <div class="a" style="left:9px;top:111px;font-size:11.8px;color:#111;white-space:nowrap">To see what data the error report contains, <span style="margin-left:0px;color:#1a1ad0;text-decoration:underline">click here.</span></div>
 <div class="a" style="left:328px;top:152px;width:74px;height:25px;background:#f5f7ef;border:1px solid #555;box-shadow:inset -1px -1px 0 #999, inset 1px 1px 0 #fff, 1px 1px 0 #888"></div>
 <div class="a" style="left:332px;top:156px;width:66px;height:17px;border:1px dotted #222"></div>
 <div class="a" style="left:328px;top:157px;width:74px;text-align:center;font-size:12.5px;color:#111"><span style="text-decoration:underline">O</span>K</div>
</div>
<div class="a" style="left:1364px;top:0;width:2px;height:728px;background:repeating-linear-gradient(#00006e 0,#00006e 58px,#e02020 58px,#e02020 60px,#00006e 60px,#00006e 64px)"></div></div>
<div id="rtask" class="a">
 <div class="a" style="left:538px;top:0;width:45px;height:40px;background:rgba(255,255,255,0.45)"></div>
 <div class="a" style="left:346px;top:38px;width:40px;height:2px;background:#0078d7"></div>
 <div class="a" style="left:395px;top:38px;width:40px;height:2px;background:#0078d7"></div>
 <div class="a" style="left:444px;top:38px;width:40px;height:2px;background:#0078d7"></div>
 <div class="a" style="left:493px;top:38px;width:40px;height:2px;background:#0078d7"></div>
 <div class="a" style="left:538px;top:38px;width:45px;height:2px;background:#0078d7"></div>
 <svg class="a" style="left:0;top:0" width="600" height="40">
  <g fill="#000"><polygon points="15,14 22,13 22,19.5 15,19.5"/><polygon points="23,12.8 32,11.5 32,19.5 23,19.5"/><polygon points="15,20.5 22,20.5 22,27 15,26"/><polygon points="23,20.5 32,20.5 32,28.5 23,27.2"/></g>
  <g fill="none" stroke="#000" stroke-width="1.6"><circle cx="74.5" cy="18" r="6"/><path d="M70 22.5L64.5 28"/></g>
  <circle cx="119.5" cy="19.5" r="6.3" fill="none" stroke="#000" stroke-width="2"/>
  <g fill="none" stroke="#000" stroke-width="1.4"><path d="M160 12.5H173M160 26.5H173"/><rect x="162.5" y="15.5" width="8" height="8"/><path d="M176 12V27" stroke-dasharray="2 2"/></g>
  <g><path d="M208 13H215L217 15H230V30H208Z" fill="#e8b840"/><rect x="208" y="17" width="22" height="13" fill="#f7d36a"/><rect x="213.5" y="22" width="11" height="3" fill="#2a7ad8"/><rect x="213.5" y="24" width="3" height="6" fill="#2a7ad8"/><rect x="221.5" y="24" width="3" height="6" fill="#2a7ad8"/></g>
  <g transform="translate(267.5,19.5)"><path d="M0 0L-9.53 -5.50A11 11 0 0 1 9.53 -5.50Z" fill="#db4437"/><path d="M0 0L9.53 -5.50A11 11 0 0 1 0 11Z" fill="#fcc934"/><path d="M0 0L0 11A11 11 0 0 1 -9.53 -5.50Z" fill="#1ea362"/><circle r="5" fill="#fff"/><circle r="3.9" fill="#4a8af4"/></g>
  <g><rect x="305" y="16" width="3.5" height="8" fill="#e8f020"/><rect x="305" y="26" width="3.5" height="4" fill="#a0a030"/><rect x="310" y="13" width="3.5" height="10" fill="#20d020"/><rect x="310" y="24" width="3.5" height="6" fill="#108010"/><rect x="315" y="8" width="3.5" height="16" fill="#e01010"/><rect x="315" y="25" width="3.5" height="7" fill="#800000"/><rect x="320" y="17" width="3.5" height="7" fill="#2030e0"/><rect x="320" y="25" width="3.5" height="3" fill="#101080"/><rect x="325" y="14" width="3.5" height="10" fill="#f020f0"/><rect x="325" y="25" width="3.5" height="5" fill="#801080"/></g>
  <g transform="translate(354,7.5) scale(0.5)"><defs><clipPath id="tsec"><ellipse cx="23.5" cy="23" rx="22" ry="14.8"/></clipPath></defs><ellipse cx="23.5" cy="23" rx="23.5" ry="16.2" fill="#fffff0"/><g clip-path="url(#tsec)"><rect x="0" y="0" width="24" height="48" fill="#0000d8"/><rect x="24" y="0" width="24" height="48" fill="#000088"/><path d="M22 13H8V20H20V27H2" fill="none" stroke="#fffff8" stroke-width="3.5"/><path d="M48 13H27V33H48M27 23H44" fill="none" stroke="#fffff8" stroke-width="3.5"/></g><path d="M24 7V39" stroke="#000" stroke-width="1.6"/></g>
  <g><rect x="403" y="8" width="24" height="24" fill="#1a1ae0"/><polygon points="403,8 415,8 403,20" fill="#fff"/><polygon points="427,20 427,32 415,32" fill="#e01010"/><text x="415" y="27" font-family="Liberation Sans" font-weight="bold" font-size="14" fill="#f0f020" text-anchor="middle">R</text></g>
  <g transform="translate(452,8) scale(0.5)"><defs><radialGradient id="tpg" cx="45%" cy="40%" r="60%"><stop offset="0" stop-color="#fafafa"/><stop offset="1" stop-color="#d8d6de"/></radialGradient></defs><circle cx="23.5" cy="23.8" r="23.2" fill="url(#tpg)"/><path d="M36 15.5A14 14 0 0 0 10 21" fill="none" stroke="#2e2e2e" stroke-width="5"/><path d="M4.5 19.5L16.5 20L9.5 31Z" fill="#2a2a2a"/><path d="M11 32A14 14 0 0 0 37 27" fill="none" stroke="#262026" stroke-width="5"/><path d="M31 28.5L43 28L38.5 16.5Z" fill="#2a2a2a"/></g>
  <g><rect x="501" y="8" width="24" height="24" fill="#ef443b"/><polygon points="510,15 515,20 510,25 505,20" fill="#fff"/><polyline points="514.5,15.5 519,20 514.5,24.5" fill="none" stroke="#fff" stroke-width="2"/></g>
  <g transform="translate(550,8) scale(0.5)"><path d="M4 16Q5 11 11 11H25L28 3L31 11H43Q48 11 48 17L46 30L46 44H9L9 30Z" fill="#000"/><path d="M7 16Q8 13 12 13H44Q46 13 46 17L44 30V43H11V30Z" fill="#f8f000"/><path d="M11 15H19L19 33H12Z" fill="#f00000"/><path d="M21 14H36V35H21Z" fill="#f00000"/><path d="M39 15H45L44 33H39Z" fill="#e00000"/><path d="M26 30Q28 26 31 30V35H26Z" fill="#f8f000" stroke="#000" stroke-width="1"/><path d="M27 4L29 4L30 11H26Z" fill="#f8d000"/><g fill="#f8f000"><circle cx="15" cy="13" r="1.3"/><circle cx="24" cy="12" r="1.3"/><circle cx="33" cy="12" r="1.3"/><circle cx="42" cy="13" r="1.3"/><circle cx="7" cy="18" r="1.2"/><circle cx="47" cy="18" r="1.2"/></g><g fill="#108010"><rect x="19" y="38" width="2" height="3"/><rect x="36" y="38" width="2" height="3"/><rect x="16" y="20" width="2" height="3"/><rect x="39" y="20" width="2" height="3"/></g><rect x="27" y="38" width="3" height="3" fill="#000"/><rect x="18" y="44" width="32" height="4" fill="#000"/><rect x="18" y="44.5" width="27" height="1.2" fill="#fff"/></g>
 </svg>
 <svg class="a" style="left:1090px;top:0" width="276" height="40">
  <path d="M7 24L13 17.5L19 24" fill="none" stroke="#111" stroke-width="1.3"/>
  <rect x="34" y="12" width="6" height="11" rx="3" fill="#111"/><path d="M32 19Q32 25.5 37 25.5Q42 25.5 42 19M37 25.5V28M34 28.5H40" fill="none" stroke="#111" stroke-width="1.2"/>
  <circle cx="61" cy="20" r="5.8" fill="#8b0a0a" stroke="#5a0000" stroke-width="0.6"/>
  <g fill="none" stroke="#111" stroke-width="1.2"><rect x="80.5" y="14.5" width="12" height="9"/><path d="M86.5 23.5V26M82 26.5H91"/><rect x="76.5" y="13.5" width="5" height="4"/><path d="M79 17.5V26.5"/></g>
  <g fill="none" stroke="#111" stroke-width="1.3"><path d="M101.5 17H104.5L108.5 13.5V26.5L104.5 23H101.5Z"/><path d="M111.5 17.5Q113 20 111.5 22.5M114 15.5Q116.5 20 114 24.5M116.5 13.5Q120 20 116.5 26.5"/></g>
  <text x="128.5" y="24.3" font-family="Liberation Sans" font-size="11.2" fill="#111">РУС</text>
  <text x="189.5" y="15.3" font-family="Liberation Sans" font-size="11.5" fill="#111" text-anchor="middle">11:59</text>
  <text x="190" y="33.3" font-family="Liberation Sans" font-size="11" letter-spacing="-0.2" fill="#111" text-anchor="middle">19.05.2021</text>
  <g><path d="M235 11H251V22H241L238 25V22H235Z" fill="#111"/><path d="M238 14H248M238 17H248M238 19.5H246" stroke="#fff" stroke-width="1"/><circle cx="250" cy="28" r="7.5" fill="#dcdcdc" stroke="#777" stroke-width="1"/><text x="250" y="32.5" font-family="Liberation Sans" font-size="12" fill="#111" text-anchor="middle">2</text></g>
  <rect x="256" y="0" width="1" height="40" fill="#b8c0d8"/>
  <rect x="274" y="0" width="2" height="40" fill="#000010"/><rect x="274" y="21" width="2" height="2" fill="#f00"/><rect x="274" y="23" width="2" height="2" fill="#000090"/>
 </svg>
</div>
</div>
<div id="w7" class="a">
 <div class="a" style="left:0;top:0;width:1600px;height:1px;background:#1c2630"></div>
 <div class="a" style="left:0;top:1px;width:1600px;height:1px;background:rgba(215,228,240,0.9)"></div>
 <div class="a" style="left:0;top:2px;width:1600px;height:10px;background:linear-gradient(rgba(150,172,196,0.95) 0,rgba(150,172,196,0.85) 40%,rgba(150,172,196,0) 100%)"></div>
 <svg class="a" style="left:1060px;top:0" width="120" height="40"><path d="M20 0Q55 10 85 40" fill="none" stroke="#b8dcf8" stroke-width="7" stroke-opacity="0.55" filter="url(#w7bl)"/><defs><filter id="w7bl"><feGaussianBlur stdDeviation="1.5"/></filter></defs></svg>
 
 <!-- buttons -->
 <div class="btn a" style="left:122px"></div>
 <div class="btn a" style="left:246px"></div>
 <div class="btn a" style="left:308px"></div>
 <div class="btn a" style="left:370px"></div>
 <div class="btn a" style="left:432px"></div>
 <div class="btn a" style="left:494px"></div>
 <div class="btn a" style="left:556px"></div>
 <svg class="a" style="left:0;top:0" width="620" height="40">
  <defs>
   <radialGradient id="orb" cx="50%" cy="40%" r="60%"><stop offset="0" stop-color="#7ab8e8"/><stop offset="0.6" stop-color="#1e5a98"/><stop offset="1" stop-color="#0a2a58"/></radialGradient>
   <linearGradient id="ie" x1="0" y1="0" x2="0" y2="1"><stop offset="0" stop-color="#5ac8f8"/><stop offset="1" stop-color="#0a58b8"/></linearGradient>
  </defs>
  <defs>
   <linearGradient id="orb2" x1="0" y1="0" x2="0" y2="1"><stop offset="0" stop-color="#c8dcea"/><stop offset="0.45" stop-color="#5a88b0"/><stop offset="0.5" stop-color="#1a5a90"/><stop offset="0.85" stop-color="#2a88c0"/><stop offset="1" stop-color="#50e0ff"/></linearGradient>
   <radialGradient id="ie2" cx="50%" cy="60%" r="55%"><stop offset="0" stop-color="#70e0ff"/><stop offset="0.6" stop-color="#2a90e0"/><stop offset="1" stop-color="#0a4aa8"/></radialGradient>
  </defs>
  <circle cx="27" cy="20" r="18" fill="url(#orb2)" stroke="#1a4a78" stroke-width="1"/>
  <circle cx="27" cy="20" r="16.8" fill="none" stroke="#b8d8f0" stroke-width="0.7" stroke-opacity="0.6"/>
  <path d="M18.5 9.5Q23 8 28.5 10L27.5 19Q22.5 17.5 17 19Z" fill="#f05a1a"/>
  <path d="M29.5 10.5Q34 12.5 39 11L37.5 20.5Q33 22 28.5 19.5Z" fill="#8cc63f"/>
  <path d="M16.5 20Q22 18.5 27.5 20.5L26 30Q21 28 15 29.5Z" fill="#2ba8e8"/>
  <path d="M28.5 21Q33 23 37.5 21.5L36 31Q31 32.5 26.5 30.5Z" fill="#fbbc09"/>
  <g transform="translate(90,19.75)">
   <path d="M-14 12Q-20 3 -6 -7Q8 -16 15 -12" fill="none" stroke="#f0b020" stroke-width="2.2"/>
   <circle r="12" fill="url(#ie2)" stroke="#0a3a80" stroke-width="0.8"/>
   <ellipse cx="1" cy="-2" rx="7" ry="5.5" fill="#d8f4ff"/>
   <rect x="-7" y="0" width="16" height="3.5" fill="#1a6ad0"/>
   <path d="M-6 3.5Q-5 9 2 9Q7 9 10 6H12V3.5H-6Z" fill="#2a88e0"/>
   <path d="M-5.5 4Q-3 7.5 2 7.5Q6 7.5 8 5.5H12V4Z" fill="#d8f4ff"/>
   <path d="M-14 12Q-8 15 8 4" fill="none" stroke="#f0b020" stroke-width="2.2"/>
   <path d="M15 -12Q18 -9 12 -3" fill="none" stroke="#f0b020" stroke-width="2"/>
  </g>
  <g transform="translate(136,8)"><path d="M0 4H8L10 2H16L18 4H30V26H0Z" fill="#e8c870"/><rect x="3" y="2" width="6" height="3" fill="#40c040"/><rect x="11" y="3" width="5" height="3" fill="#e02020"/><rect x="20" y="4" width="5" height="3" fill="#2080e0"/><rect x="0" y="8" width="30" height="19" fill="#f6dc8a"/><path d="M5 27V16H25V27" fill="none" stroke="#a8d8f0" stroke-width="3"/><path d="M5 20H25" stroke="#a8d8f0" stroke-width="2"/></g>
  <g transform="translate(199,7)"><rect x="6" y="1" width="20" height="24" fill="#9ac8e8" fill-opacity="0.8"/><rect x="10" y="0" width="18" height="24" fill="none" stroke="#c8e4f8" stroke-width="1"/><circle cx="14" cy="13" r="9" fill="#f26a12"/><path d="M11 8V18L19 13Z" fill="#fff"/></g>
  <g transform="translate(275,19.75)"><path d="M0 0L-12.99 -7.50A15 15 0 0 1 12.99 -7.50Z" fill="#db4437"/><path d="M0 0L12.99 -7.50A15 15 0 0 1 0 15Z" fill="#fcc934"/><path d="M0 0L0 15A15 15 0 0 1 -12.99 -7.50Z" fill="#1ea362"/><circle r="7" fill="#fff"/><circle r="5.5" fill="#4a8af4"/></g>
  <g transform="translate(337,20)"><circle r="15" fill="#1f63c0"/><path d="M-14 -4Q-10 -16 4 -14Q16 -10 14 6Q10 14 2 15Q12 6 8 -4Q2 -12 -8 -8Z" fill="#5aa8e8"/><path d="M-12 -2L6 -6L12 8L-2 13L-12 8Z" fill="#f8f8f0"/><path d="M-12 -2L2 5L6 -6" fill="none" stroke="#bbb" stroke-width="0.8"/></g>
  <g transform="translate(399,19)"><path d="M-12 -12H12Q15 -12 15 -9V8Q15 12 11 12H-3L-9 17V12H-11Q-14 12 -14 8V-9Q-14 -12 -12 -12Z" fill="#7360f2" stroke="#fff" stroke-width="1.5"/><path d="M-6 -6Q-8 -4 -5 1Q-1 6 3 6Q5 5 4 3L2 2L0 3Q-3 1 -4 -2L-3 -4L-4 -6Z" fill="#fff"/><path d="M2 -7Q7 -7 8 -2M2 -4Q5 -4 5 -1" fill="none" stroke="#fff" stroke-width="1"/></g>
  <rect x="398" y="20" width="16.5" height="17" rx="5" fill="#e8302a"/><text x="406.3" y="33.5" font-family="Liberation Sans" font-size="13" fill="#fff" text-anchor="middle">5</text>
  <g transform="translate(460,21)"><ellipse cx="2" cy="-2" rx="15" ry="8" transform="rotate(-20)" fill="#1a90f0"/><ellipse cx="-2" cy="-6" rx="9" ry="4" transform="rotate(-20)" fill="#081838"/><ellipse cx="0" cy="5" rx="8" ry="3.5" transform="rotate(-15)" fill="#fff"/></g>
  <g transform="translate(508,9)"><rect x="12" y="3" width="18" height="24" fill="#fff" stroke="#1d7a45" stroke-width="1"/><path d="M16 7H29M16 11H29M16 15H29M16 19H29M16 23H29M21 4V27" stroke="#1d7a45" stroke-width="1.3"/><path d="M0 3.5L18 0V27L0 23.5Z" fill="#1d7245"/><text x="8.5" y="19.5" font-family="Liberation Sans" font-weight="bold" font-size="14" fill="#fff" text-anchor="middle">X</text></g>
  <g transform="translate(569,8)"><rect width="32" height="32" fill="#ef443b"/><polygon points="12,9 19,16 12,23 5,16" fill="#fff"/><polyline points="18.5,9.5 25,16 18.5,22.5" fill="none" stroke="#fff" stroke-width="2.6"/></g>
 </svg>
 <svg class="a" style="left:1350px;top:0" width="250" height="40">
  <text x="12" y="24" font-family="Liberation Sans" font-size="12" fill="#fff">EN</text>
  <path d="M44.5 21.5L48 18L51.5 21.5Z" fill="#fff"/>
  <g transform="translate(72,20)"><ellipse rx="8.5" ry="4.5" transform="rotate(-25)" fill="none" stroke="#fff" stroke-width="1.8"/><ellipse cx="1" cy="1" rx="5" ry="2" transform="rotate(-25)" fill="#fff"/></g>
  <g><path d="M89 12V28" stroke="#fff" stroke-width="1.3"/><path d="M89.5 12.5H98L97 14L102 15V21H93L92 19H89.5Z" fill="#eee"/><circle cx="99" cy="24.5" r="4.5" fill="#e02020" stroke="#fff" stroke-width="0.8"/><path d="M97 22.5L101 26.5M101 22.5L97 26.5" stroke="#fff" stroke-width="1.2"/></g>
  <g fill="none" stroke="#fff" stroke-width="1.3"><rect x="120.5" y="15.5" width="11" height="9"/><path d="M126 24.5V27.5M121 27.5H131"/><rect x="114.5" y="12.5" width="4" height="4"/><path d="M116.5 16.5V28M114 28H119"/></g>
  <g fill="#fff"><path d="M137 17H140L144 13V27L140 23H137Z"/></g><g fill="none" stroke="#fff" stroke-width="1.2"><path d="M147 17.5Q148.5 20 147 22.5M149.5 15.5Q152 20 149.5 24.5"/></g>
  <text x="197" y="17.5" font-family="Liberation Sans" font-size="11.5" fill="#fff" text-anchor="middle">10:59</text>
  <text x="196.5" y="34" font-family="Liberation Sans" font-size="11" letter-spacing="-0.2" fill="#fff" text-anchor="middle">19.05.2021</text>
  <rect x="236" y="1" width="14" height="39" fill="rgba(255,255,255,0.08)" stroke="rgba(200,220,240,0.5)" stroke-width="1"/>
 </svg>
</div>
</body></html>
